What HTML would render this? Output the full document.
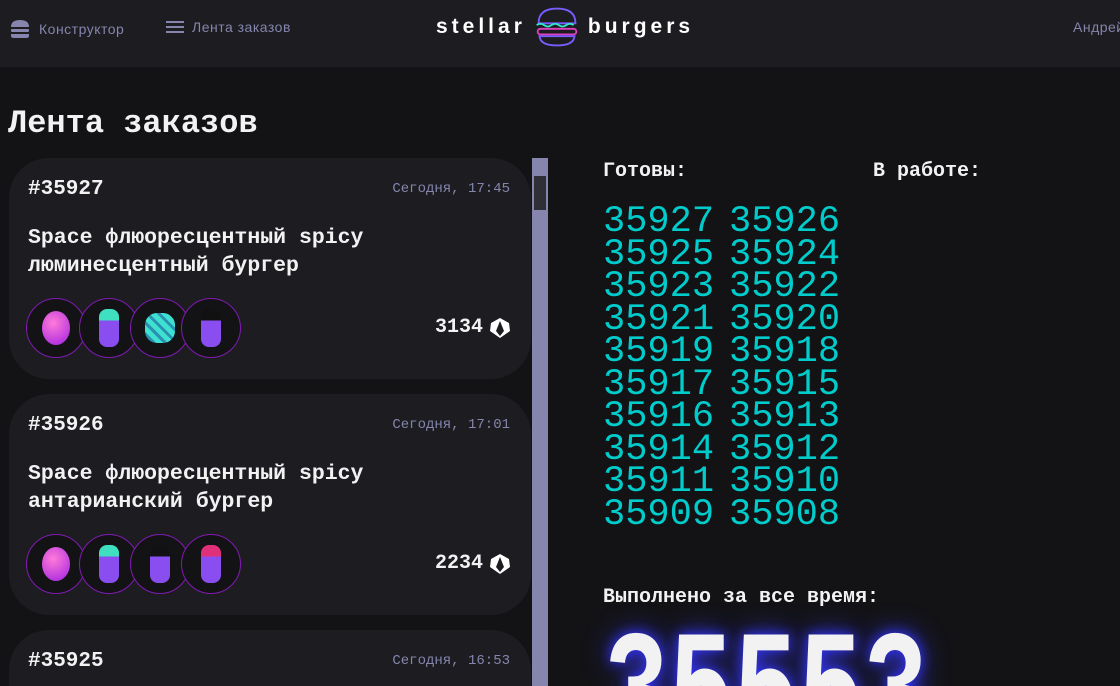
<!DOCTYPE html>
<html><head><meta charset="utf-8"><style>
*{margin:0;padding:0;box-sizing:border-box}
html,body{width:1120px;height:686px;overflow:hidden}
body{background:#131316;color:#f2f2f3;font-family:"Liberation Mono","DejaVu Sans Mono",monospace;position:relative}
.hdr{position:absolute;left:0;top:0;width:1120px;height:67px;background:#1c1c21}
.nav{position:absolute;top:19px;font-size:14px;color:#8585ad;font-family:"Liberation Sans Narrow","Liberation Sans",sans-serif;letter-spacing:0.5px;display:flex;align-items:center;gap:8px}
.logo{position:absolute;left:436px;top:5px;display:flex;align-items:center;gap:7px;font-family:"Liberation Sans",sans-serif;font-weight:bold;font-size:21px;letter-spacing:4px;color:#fff}
h1{position:absolute;left:8px;top:105px;font-size:32px;font-weight:bold}
.card{position:absolute;left:9px;width:522px;height:221px;background:#1c1c21;border-radius:40px}
.num{position:absolute;left:19px;top:20px;font-size:21px;font-weight:bold}
.date{position:absolute;right:21px;top:23px;font-size:14px;color:#8585ad}
.name{position:absolute;left:19px;top:66px;font-size:21.5px;font-weight:bold;line-height:28px}
.ing{position:absolute;top:140px;width:60px;height:60px;border-radius:50%;border:1.5px solid #801ab3;background:#131316;display:flex;align-items:center;justify-content:center}
.price{position:absolute;right:20px;top:158px;font-size:20px;font-weight:bold;display:flex;align-items:center;gap:6px}
.sb{position:absolute;left:532px;top:158px;width:16px;height:528px;background:#8585ad}
.sb .t{position:absolute;left:2px;top:18px;width:12px;height:34px;background:#2f2f37}
.lbl{position:absolute;font-size:20px;font-weight:bold}
.ready{position:absolute;top:206px;font-size:37px;line-height:32.5px;color:#00cccc}
.big{position:absolute;left:604px;top:610px;font-size:108px;line-height:120px;font-weight:bold;transform:scaleY(1.45);transform-origin:top left;text-shadow:0 0 10px #3333ff,0 0 22px #3333cc}
</style></head><body>
<div class="hdr">
 <div class="nav" style="left:9px"><svg width="22" height="20" viewBox="0 0 22 20"><path d="M2 8 Q2 1 11 1 Q20 1 20 8Z" fill="#8585ad"/><rect x="2" y="10" width="18" height="3" rx="1" fill="#8585ad"/><path d="M2 15 H20 V17 Q20 19 17 19 H5 Q2 19 2 17Z" fill="#8585ad"/></svg>Конструктор</div>
 <div class="nav" style="left:166px"><svg width="18" height="14" viewBox="0 0 18 14"><rect y="1" width="18" height="2" fill="#8585ad"/><rect y="6" width="18" height="2" fill="#8585ad"/><rect y="11" width="18" height="2" fill="#8585ad"/></svg>Лента заказов</div>
 <div class="logo"><span>stellar</span><svg width="48" height="44" viewBox="0 0 52 44"><path d="M6 18 Q6 2 26 2 Q46 2 46 18Z" fill="#1c1c21" stroke="#7a5cff" stroke-width="2"/><path d="M4 20 q4-3 8 0 q4 3 8 0 q4-3 8 0 q4 3 8 0 q4-3 8 0" fill="none" stroke="#2ee6c6" stroke-width="2"/><rect x="5" y="24" width="42" height="6" rx="3" fill="none" stroke="#e040c0" stroke-width="2"/><path d="M7 32 Q8 42 26 42 Q44 42 45 32Z" fill="#1c1c21" stroke="#7a5cff" stroke-width="2"/></svg><span>burgers</span></div>
 <div class="nav" style="left:1073px">Андрей</div>
</div>
<h1>Лента заказов</h1>

<div class="card" style="top:158px">
 <div class="num">#35927</div><div class="date">Сегодня, 17:45</div>
 <div class="name">Space флюоресцентный spicy<br>люминесцентный бургер</div>
 <div class="ing" style="left:17px"><div style="width:28px;height:34px;border-radius:50%;background:radial-gradient(circle at 40% 35%,#ff7ad9,#a020e0)"></div></div>
 <div class="ing" style="left:70px"><div style="width:20px;height:38px;border-radius:8px;background:linear-gradient(#3ee0c0 30%,#8a4ef0 30%)"></div></div>
 <div class="ing" style="left:121px"><div style="width:30px;height:30px;border-radius:40%;background:repeating-linear-gradient(45deg,#3ee0d0 0 5px,#2a8fb0 5px 8px)"></div></div>
 <div class="ing" style="left:172px"><div style="width:20px;height:38px;border-radius:8px;background:linear-gradient(#111 30%,#8a4ef0 30%)"></div></div>
 <div class="price">3134 <svg width="22" height="22" viewBox="0 0 22 22"><path d="M11 1 L20 6 L21 14 L11 21 L1 14 L2 6Z" fill="#fff"/><path d="M11 4 L7 14 L11 19 L15 14Z" fill="#1c1c21"/></svg></div>
</div>

<div class="card" style="top:394px">
 <div class="num">#35926</div><div class="date">Сегодня, 17:01</div>
 <div class="name">Space флюоресцентный spicy<br>антарианский бургер</div>
 <div class="ing" style="left:17px"><div style="width:28px;height:34px;border-radius:50%;background:radial-gradient(circle at 40% 35%,#ff7ad9,#a020e0)"></div></div>
 <div class="ing" style="left:70px"><div style="width:20px;height:38px;border-radius:8px;background:linear-gradient(#3ee0c0 30%,#8a4ef0 30%)"></div></div>
 <div class="ing" style="left:121px"><div style="width:20px;height:38px;border-radius:8px;background:linear-gradient(#111 30%,#8a4ef0 30%)"></div></div>
 <div class="ing" style="left:172px"><div style="width:20px;height:38px;border-radius:8px;background:linear-gradient(#e0307a 30%,#8a4ef0 30%)"></div></div>
 <div class="price">2234 <svg width="22" height="22" viewBox="0 0 22 22"><path d="M11 1 L20 6 L21 14 L11 21 L1 14 L2 6Z" fill="#fff"/><path d="M11 4 L7 14 L11 19 L15 14Z" fill="#1c1c21"/></svg></div>
</div>

<div class="card" style="top:630px;height:56px;border-radius:40px 40px 0 0">
 <div class="num">#35925</div><div class="date">Сегодня, 16:53</div>
</div>
<div class="sb"><div class="t"></div></div>

<div class="lbl" style="left:603px;top:160px">Готовы:</div>
<div class="lbl" style="left:873px;top:160px">В работе:</div>
<div class="ready" style="left:603px">35927<br>35925<br>35923<br>35921<br>35919<br>35917<br>35916<br>35914<br>35911<br>35909</div>
<div class="ready" style="left:729px">35926<br>35924<br>35922<br>35920<br>35918<br>35915<br>35913<br>35912<br>35910<br>35908</div>
<div class="lbl" style="left:603px;top:586px">Выполнено за все время:</div>
<div class="big">35553</div>
</body></html>
